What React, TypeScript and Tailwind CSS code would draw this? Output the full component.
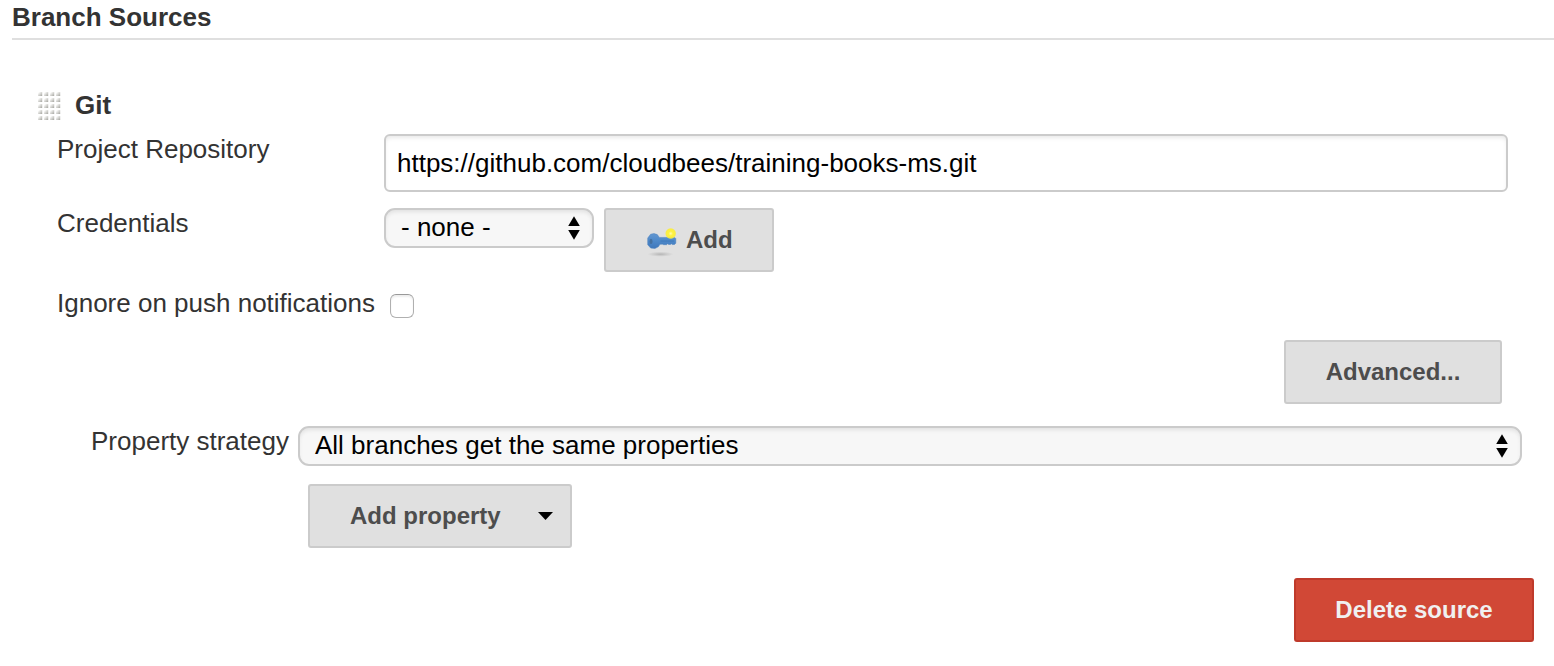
import type { ReactNode } from "react";

function DragHandle() {
  return (
    <svg width="24" height="30" viewBox="0 0 24 30" className="shrink-0">
      <defs>
        <linearGradient id="dot" x1="0" y1="0" x2="1" y2="1">
          <stop offset="0.15" stopColor="#fdfdfc" />
          <stop offset="1" stopColor="#a3a39d" />
        </linearGradient>
      </defs>
      {[0, 1, 2, 3, 4].map((row) =>
        [0, 1, 2, 3].map((col) => (
          <rect key={`${row}-${col}`} x={1 + col * 6} y={2 + row * 6} width="4.2" height="4" fill="url(#dot)" />
        )),
      )}
    </svg>
  );
}

function SelectArrows() {
  return (
    <svg width="12" height="24" viewBox="0 0 12 24" className="shrink-0" fill="#000">
      <path d="M6 .3 11.8 10H.2Z" />
      <path d="M6 23.7 11.8 14H.2Z" />
    </svg>
  );
}

function KeyIcon() {
  return (
    <svg width="32" height="32" viewBox="0 0 32 32" className="shrink-0 overflow-visible">
      <defs>
        <radialGradient id="spark">
          <stop offset="0" stopColor="#fffbb0" />
          <stop offset="0.4" stopColor="#fff23c" />
          <stop offset="0.8" stopColor="#fbee38" stopOpacity="0.9" />
          <stop offset="1" stopColor="#f4eb60" stopOpacity="0" />
        </radialGradient>
        <radialGradient id="shade">
          <stop offset="0" stopColor="#888" stopOpacity="0.5" />
          <stop offset="1" stopColor="#999" stopOpacity="0" />
        </radialGradient>
        <linearGradient id="metal" x1="0" y1="0" x2="0" y2="1">
          <stop offset="0" stopColor="#6397d0" />
          <stop offset="0.5" stopColor="#4d88c9" />
          <stop offset="1" stopColor="#3f77ba" />
        </linearGradient>
      </defs>
      <ellipse cx="14.5" cy="30.2" rx="13" ry="2.6" fill="url(#shade)" />
      <path
        d="M4.6 10.2 8 9.6l3.3 1 2 2.8h15.3l1.2 1.2v4.6l-1.3 1.3h-2.3l-.8-.7-1 .7h-1.8l-.9-.8-1.1 1h-3l-1-.5h-2.6l-1.7 2.6-3.4 1.7-4.2-.4-3-3.4v-6.6Z"
        fill="url(#metal)"
        stroke="#4a80bf"
        strokeWidth="0.5"
        strokeLinejoin="round"
      />
      <path d="M14.5 17h13.5" stroke="#3a73b5" strokeWidth="1" strokeOpacity="0.7" />
      <ellipse cx="5" cy="17.4" rx="1.5" ry="2.6" fill="#44709f" />
      <circle cx="24.7" cy="9.5" r="5.8" fill="url(#spark)" />
    </svg>
  );
}

function Button({ className, children }: { className: string; children: ReactNode }) {
  return (
    <button
      type="button"
      className={`flex h-16 shrink-0 items-center rounded-[3px] border-2 text-2xl leading-7 font-bold whitespace-nowrap ${className}`}
    >
      {children}
    </button>
  );
}

function Select({ value, className }: { value: string; className: string }) {
  return (
    <button
      type="button"
      role="combobox"
      aria-expanded="false"
      aria-controls="options"
      className={`flex h-10 items-center justify-between rounded-[11px] border-2 border-[#cbcbcb] bg-[#f7f7f7] pl-[15px] text-left leading-[30px] text-black shadow-[inset_0_3px_4px_-1px_rgba(0,0,0,0.09)] ${className}`}
    >
      <span className="pb-0.5">{value}</span>
      <SelectArrows />
    </button>
  );
}

export default function App() {
  return (
    <main className="h-[666px] overflow-hidden bg-white pl-3 font-['Liberation_Sans',Arial,sans-serif] text-[26px] leading-[30px] text-[#333]">
      <h2 className="h-10 border-b-2 border-[#dfdfdf] pt-0.5 font-bold">Branch Sources</h2>

      <section className="flex flex-col pt-[50px]">
        <div className="flex h-11 items-start pl-[25px]">
          <DragHandle />
          <h3 className="ml-3.5 font-bold">Git</h3>
        </div>

        <div className="flex h-[74px] items-start pl-[45px]">
          <label htmlFor="repository" className="w-[327px] shrink-0">
            Project Repository
          </label>
          <input
            id="repository"
            type="text"
            defaultValue="https://github.com/cloudbees/training-books-ms.git"
            className="h-[58px] w-[1124px] rounded-md border-2 border-[#cbcbcb] bg-white px-[11px] text-black shadow-[inset_0_3px_4px_-1px_rgba(0,0,0,0.09)] outline-none"
          />
        </div>

        <div className="flex h-20 items-start pl-[45px]">
          <span className="w-[327px] shrink-0">Credentials</span>
          <Select value="- none -" className="w-[210px] pr-[12px]" />
          <Button className="ml-2.5 w-[170px] gap-2 border-[#cbcbcb] bg-[#e0e0e0] pl-10 text-[#4d4d4d]">
            <KeyIcon />
            Add
          </Button>
        </div>

        <div className="flex h-[52px] items-start pl-[45px]">
          <label htmlFor="ignore" className="w-[333px] shrink-0">
            Ignore on push notifications
          </label>
          <input
            id="ignore"
            type="checkbox"
            className="mt-1.5 size-6 appearance-none rounded-md border border-[#b0b0b0] border-t-[#999] bg-white shadow-[inset_0_2px_2px_rgba(0,0,0,0.07)]"
          />
        </div>

        <div className="flex h-[86px] items-start justify-end pr-[52px]">
          <Button className="w-[218px] justify-center border-[#cbcbcb] bg-[#e0e0e0] text-[#4d4d4d]">Advanced...</Button>
        </div>

        <div className="flex h-[58px] items-start pl-[79px]">
          <span className="w-[207px] shrink-0">Property strategy</span>
          <Select value="All branches get the same properties" className="w-[1224px] pr-[12px]" />
        </div>

        <div className="flex h-[94px] items-start pl-[296px]">
          <Button className="w-[264px] justify-between border-[#cbcbcb] bg-[#e0e0e0] pr-[17px] pl-10 text-[#4d4d4d]">
            Add property
            <svg width="15" height="8" viewBox="0 0 15 8" fill="#000">
              <path d="M0 0h15L7.5 8Z" />
            </svg>
          </Button>
        </div>

        <div className="flex justify-end pr-5">
          <Button className="w-60 justify-center border-[#bf3a2b] bg-[#d14836] text-[#f0f0f0]">Delete source</Button>
        </div>
      </section>
    </main>
  );
}
